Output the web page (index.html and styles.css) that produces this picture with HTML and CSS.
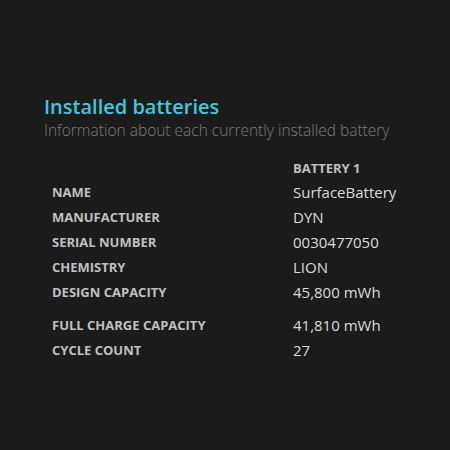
FILE: index.html
```html
<!DOCTYPE html>
<html>
<head>
<meta charset="utf-8">
<link rel="stylesheet" href="styles.css">
</head>
<body>
<div class="page">
  <h1 class="title">Installed batteries</h1>
  <p class="subtitle">Information about each currently installed battery</p>
  <div class="table">
    <div class="row head"><span class="label"></span><span class="value colhead">BATTERY 1</span></div>
    <div class="row"><span class="label">NAME</span><span class="value">SurfaceBattery</span></div>
    <div class="row"><span class="label">MANUFACTURER</span><span class="value">DYN</span></div>
    <div class="row"><span class="label">SERIAL NUMBER</span><span class="value">0030477050</span></div>
    <div class="row"><span class="label">CHEMISTRY</span><span class="value">LION</span></div>
    <div class="row"><span class="label">DESIGN CAPACITY</span><span class="value">45,800 mWh</span></div>
    <div class="row gap"><span class="label">FULL CHARGE CAPACITY</span><span class="value">41,810 mWh</span></div>
    <div class="row"><span class="label">CYCLE COUNT</span><span class="value">27</span></div>
  </div>
</div>
</body>
</html>
```
FILE: styles.css
```css
html, body {
  margin: 0;
  padding: 0;
  background: #1b1b1b;
  width: 450px;
  height: 450px;
  overflow: hidden;
}
.page {
  padding: 94px 0 0 44px;
  font-family: "Open Sans", "Noto Sans", sans-serif;
}
.title {
  margin: 0;
  font-size: 20px;
  font-weight: 600;
  color: #3ccbdb;
  line-height: 25px;
}
.subtitle {
  margin: 0;
  font-size: 15.5px;
  font-weight: 300;
  color: #7c7c7c;
  line-height: 22px;
}
.table {
  margin-top: 16px;
  padding-left: 8px;
}
.row {
  display: grid;
  grid-template-columns: 241px auto;
  height: 25px;
  align-items: center;
}
.row.head {
  height: 22px;
}
.row.gap {
  margin-top: 8px;
}
.label {
  font-size: 13px;
  font-weight: 700;
  color: #c0c0c0;
}
.value {
  font-size: 15px;
  color: #dcdcdc;
}
.colhead {
  font-size: 13px;
  font-weight: 700;
  color: #c0c0c0;
}
```
